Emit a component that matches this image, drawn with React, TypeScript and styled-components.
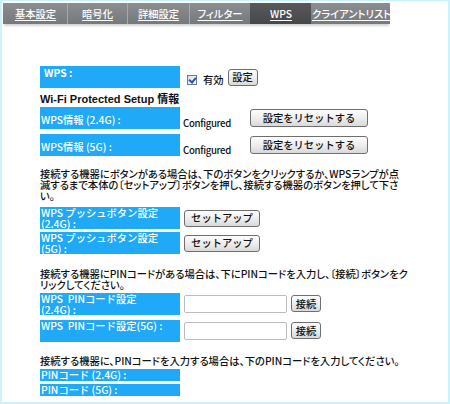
import React from "react";
import styled, { createGlobalStyle } from "styled-components";

const FONT = `"Noto Sans CJK JP", "Liberation Sans", sans-serif`;

const Global = createGlobalStyle`
  html, body { margin: 0; padding: 0; background: #fff; }
  body { font-family: ${FONT}; }
`;

const Frame = styled.div`
  width: 450px;
  height: 404px;
  box-sizing: border-box;
  border: 2px solid #c9f4fc;
  border-top-width: 1px;
  background: #fff;
  overflow: hidden;
  font-family: ${FONT};
  font-size: 10.3px;
  font-weight: 500;
  color: #111;
`;

const TabBar = styled.nav`
  display: flex;
  margin: 2px 0 0 1px;
  width: 387px;
  height: 21px;
  background: linear-gradient(#8b8e90, #76797b);
  box-shadow: 0 3px 2px -1px #d4d4d4;
`;

const Tab = styled.a<{ $w: number; $active?: boolean; $sep?: boolean }>`
  flex: 0 0 ${(p) => p.$w}px;
  box-sizing: border-box;
  display: block;
  height: 21px;
  line-height: 22px;
  text-align: center;
  white-space: nowrap;
  overflow: hidden;
  color: #fff;
  font-feature-settings: "palt";
  text-decoration: underline;
  text-underline-offset: 2px;
  border-left: 1px solid ${(p) => (p.$sep ? "#a6a8aa" : "transparent")};
  background: ${(p) => (p.$active ? "linear-gradient(#57595b, #454749)" : "transparent")};
`;

const Main = styled.main`
  display: flex;
  flex-direction: column;
  padding: 42px 0 0 38px;
`;

const Row = styled.div<{ $h: number; $mt?: number }>`
  display: flex;
  height: ${(p) => p.$h}px;
  margin-top: ${(p) => p.$mt ?? 0}px;
`;

const Label = styled.div<{ $align?: "top" | "middle"; $bold?: boolean; $pad?: string }>`
  flex: 0 0 140px;
  box-sizing: border-box;
  display: flex;
  flex-direction: column;
  justify-content: ${(p) => (p.$align === "middle" ? "center" : "flex-start")};
  padding: ${(p) => p.$pad ?? "0 1px"};
  background: #1fa9f7;
  color: #fff;
  line-height: 11px;
  font-weight: ${(p) => (p.$bold ? 700 : 500)};
  white-space: nowrap;
`;

const Value = styled.div<{ $pl?: number }>`
  display: flex;
  align-items: center;
  gap: 4px;
  padding-left: ${(p) => p.$pl ?? 4}px;
`;

const CheckLabel = styled.label`
  display: flex;
  align-items: center;
  gap: 6px;
  padding-top: 6px;
  line-height: 10px;
`;

const Check = styled.input`
  appearance: none;
  -webkit-appearance: none;
  margin: 0;
  width: 10px;
  height: 10px;
  box-sizing: border-box;
  border: 1px solid #6a7d92;
  background: linear-gradient(135deg, #dedede, #ffffff);
  position: relative;
  &::after {
    content: "";
    position: absolute;
    left: 2px;
    top: 0px;
    width: 3px;
    height: 5px;
    border: solid #2a4fb8;
    border-width: 0 2px 2px 0;
    transform: rotate(40deg);
  }
`;

const Button = styled.button<{ $w: number; $h?: number }>`
  width: ${(p) => p.$w}px;
  height: ${(p) => p.$h ?? 17}px;
  margin: 0;
  padding: 0;
  box-sizing: border-box;
  border: 1px solid #6f6f6f;
  border-radius: 3px;
  background: linear-gradient(#fdfdfd, #ececec 55%, #d9d9d9);
  font-family: ${FONT};
  font-size: 10.3px;
  font-weight: 500;
  line-height: 10px;
  color: #111;
`;

const Status = styled.span`
  width: 63px;
  padding-top: 9px;
  font-size: 9.6px;
  letter-spacing: -0.3px;
  line-height: 10px;
`;

const Heading = styled.h3`
  margin: 0;
  padding-top: 4px;
  height: 15px;
  line-height: 15px;
  font-family: "Liberation Sans", "Noto Sans CJK JP", sans-serif;
  font-size: 11px;
  font-weight: 700;
  color: #111;
`;

const Para = styled.p<{ $mt: number; $mb: number }>`
  margin: ${(p) => p.$mt}px 0 ${(p) => p.$mb}px;
  line-height: 11px;
  white-space: nowrap;
  font-feature-settings: "palt";
  color: #111;
`;

const PinInput = styled.input`
  width: 103px;
  height: 18px;
  margin: 0;
  box-sizing: border-box;
  border: 1px solid #bcbcbc;
  border-radius: 2px;
  background: #fff;
`;

const tabs = [
  { t: "基本設定", w: 64 },
  { t: "暗号化", w: 60, sep: true },
  { t: "詳細設定", w: 62, sep: true },
  { t: "フィルター", w: 61, sep: true },
  { t: "WPS", w: 61, active: true },
  { t: "クライアントリスト", w: 79 },
];

export default function App() {
  return (
    <>
      <Global />
      <Frame>
        <TabBar>
          {tabs.map((x) => (
            <Tab key={x.t} $w={x.w} $sep={x.sep} $active={x.active} href="#">
              {x.t}
            </Tab>
          ))}
        </TabBar>
        <Main>
          <Row $h={22}>
            <Label $bold $pad="1px 4px">WPS :</Label>
            <Value $pl={7}>
              <CheckLabel>
                <Check type="checkbox" defaultChecked />
                有効
              </CheckLabel>
              <Button $w={30}>設定</Button>
            </Value>
          </Row>
          <Heading>Wi-Fi Protected Setup 情報</Heading>
          <Row $h={22}>
            <Label $align="middle" $pad="3px 1px 0">WPS情報 (2.4G) :</Label>
            <Value $pl={3}>
              <Status>Configured</Status>
              <Button $w={118} $h={18}>設定をリセットする</Button>
            </Value>
          </Row>
          <Row $h={22} $mt={5}>
            <Label $align="middle" $pad="3px 1px 0">WPS情報 (5G) :</Label>
            <Value $pl={3}>
              <Status>Configured</Status>
              <Button $w={118} $h={18}>設定をリセットする</Button>
            </Value>
          </Row>
          <Para $mt={12} $mb={6}>
            接続する機器にボタンがある場合は、下のボタンをクリックするか、WPSランプが点
            <br />
            滅するまで本体の〔セットアップ〕ボタンを押し、接続する機器のボタンを押して下さ
            <br />
            い。
          </Para>
          <Row $h={22}>
            <Label>
              <span>WPS プッシュボタン設定</span>
              <span>(2.4G) :</span>
            </Label>
            <Value>
              <Button $w={76}>セットアップ</Button>
            </Value>
          </Row>
          <Row $h={22} $mt={3}>
            <Label>
              <span>WPS プッシュボタン設定</span>
              <span>(5G) :</span>
            </Label>
            <Value>
              <Button $w={76}>セットアップ</Button>
            </Value>
          </Row>
          <Para $mt={13.5} $mb={3}>
            接続する機器にPINコードがある場合は、下にPINコードを入力し、〔接続〕ボタンをク
            <br />
            リックしてください。
          </Para>
          <Row $h={22}>
            <Label>
              <span>WPS&nbsp;&nbsp;PINコード設定</span>
              <span>(2.4G) :</span>
            </Label>
            <Value>
              <PinInput type="text" />
              <Button $w={30}>接続</Button>
            </Value>
          </Row>
          <Row $h={22} $mt={5}>
            <Label>
              <span>WPS&nbsp;&nbsp;PINコード設定(5G) :</span>
            </Label>
            <Value>
              <PinInput type="text" />
              <Button $w={30}>接続</Button>
            </Value>
          </Row>
          <Para $mt={13} $mb={3}>
            接続する機器に、PINコードを入力する場合は、下のPINコードを入力してください。
          </Para>
          <Row $h={12}>
            <Label $align="middle">PINコード (2.4G) :</Label>
          </Row>
          <Row $h={12} $mt={3}>
            <Label $align="middle">PINコード (5G) :</Label>
          </Row>
        </Main>
      </Frame>
    </>
  );
}
